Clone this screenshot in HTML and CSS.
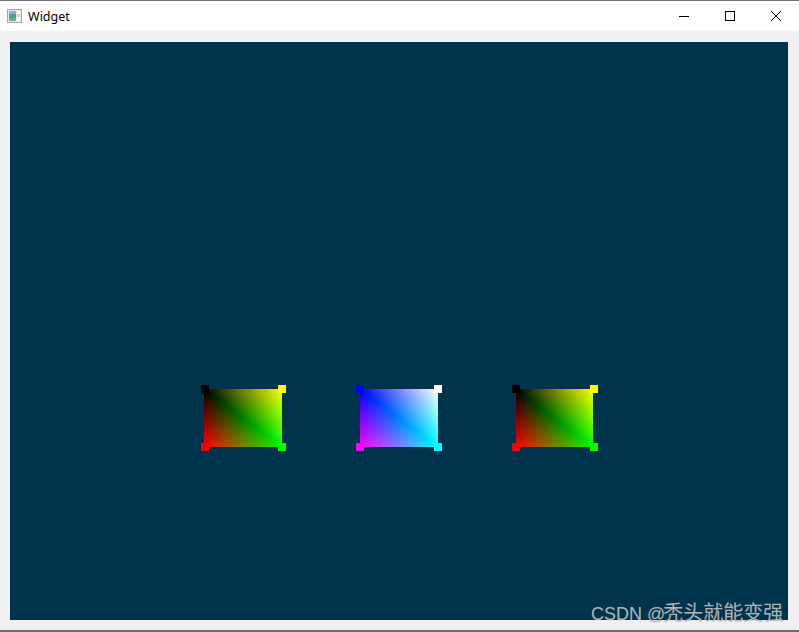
FILE: index.html
```html
<!DOCTYPE html>
<html lang="zh">
<head>
  <meta charset="UTF-8">
  <meta name="viewport" content="width=device-width, initial-scale=1.0">
  <title>Widget</title>
  <link rel="stylesheet" href="styles.css">
</head>
<body>

  <div class="window">
    <div class="titlebar">
      <svg class="app-icon" width="15" height="14" viewBox="0 0 15 14">
        <rect x="0.5" y="0.5" width="14" height="13" fill="#ececec" stroke="#a6a6a6"/>
        <rect x="2" y="2" width="7" height="10" fill="#5f97a0"/>
        <rect x="2" y="2" width="7" height="3" fill="#8fb0cc"/>
        <rect x="2" y="9" width="7" height="3" fill="#76ab8c"/>
        <rect x="10" y="2" width="3" height="10" fill="#f4f6f2"/>
        <rect x="10" y="5" width="3" height="3" fill="#c3d8d3"/>
      </svg>
      <span class="title">Widget</span>
      <div class="controls">
        <button class="control">
          <svg width="12" height="12" viewBox="0 0 12 12"><path d="M1 6.5h10" stroke="#000" fill="none"/></svg>
        </button>
        <button class="control">
          <svg width="12" height="12" viewBox="0 0 12 12"><rect x="1.5" y="1.5" width="9" height="9" stroke="#000" fill="none"/></svg>
        </button>
        <button class="control">
          <svg width="12" height="12" viewBox="0 0 12 12"><path d="M1 1l10 10M11 1L1 11" stroke="#000" fill="none"/></svg>
        </button>
      </div>
    </div>

    <div class="client">
      <div class="canvas">
        <div class="quad quad-warm quad-first">
          <i class="handle tl black"></i>
          <i class="handle tr yellow"></i>
          <i class="handle bl red"></i>
          <i class="handle br green"></i>
        </div>
        <div class="quad quad-cool">
          <i class="handle tl blue"></i>
          <i class="handle tr white"></i>
          <i class="handle bl magenta"></i>
          <i class="handle br cyan"></i>
        </div>
        <div class="quad quad-warm quad-last">
          <i class="handle tl black"></i>
          <i class="handle tr yellow"></i>
          <i class="handle bl red"></i>
          <i class="handle br green"></i>
        </div>
      </div>
    </div>
  </div>

  <div class="watermark">CSDN @<span class="watermark-cjk">秃头就能变强</span></div>

</body>
</html>
```

FILE: styles.css
```css
html, body {
  margin: 0;
  padding: 0;
  height: 100%;
  overflow: hidden;
}

body {
  position: relative;
  font-family: "Noto Sans", "Liberation Sans", sans-serif;
}

.window {
  display: flex;
  flex-direction: column;
  height: 632px;
  box-sizing: border-box;
  border-top: 1px solid #707070;
  border-bottom: 2px solid #6e6e6e;
  background-color: #f0f0f0;
}

.titlebar {
  display: flex;
  align-items: center;
  height: 30px;
  padding-left: 7px;
  background-color: #fff;
}

.app-icon {
  flex: none;
  margin-bottom: 1px;
}

.title {
  margin-left: 6px;
  font-size: 12.5px;
  color: #000;
}

.controls {
  display: flex;
  margin-left: auto;
}

.control {
  display: flex;
  align-items: center;
  justify-content: center;
  width: 46px;
  height: 30px;
  padding: 0;
  border: none;
  background: none;
}

.client {
  flex-grow: 1;
  padding: 11px 11px 10px 10px;
}

.canvas {
  display: flex;
  gap: 78px;
  height: 100%;
  box-sizing: border-box;
  padding: 347px 0 0 194px;
  background-color: #00344d;
}

/* Colours run like a GL quad split on the top-left to bottom-right diagonal */
.quad {
  position: relative;
  width: 78px;
  height: 58px;
  background-blend-mode: screen;
}

.quad-warm {
  background-image:
    linear-gradient(to right, #000, #0f0),
    linear-gradient(to top right, #f00, #000, #f00);
}

.quad-cool {
  background-image:
    linear-gradient(to right, #000, #0f0),
    linear-gradient(to top right, #f00, #000, #f00),
    linear-gradient(#00f, #00f);
}

.quad-last {
  width: 77px;
}

.handle {
  position: absolute;
  width: 8px;
  height: 8px;
}

.tl { left: -4px; top: -4px; }
.tr { right: -4px; top: -4px; }
.bl { left: -4px; bottom: -4px; }
.br { right: -4px; bottom: -4px; }

.quad-first .tl,
.quad-first .bl {
  left: -3px;
}

.quad-last .tr,
.quad-last .br {
  right: -5px;
}

.black { background-color: #000; }
.white { background-color: #fff; }
.red { background-color: #f00; }
.green { background-color: #0f0; }
.blue { background-color: #00f; }
.yellow { background-color: #ff0; }
.magenta { background-color: #f0f; }
.cyan { background-color: #0ff; }

.watermark {
  position: absolute;
  left: 591px;
  top: 601px;
  font-family: "Liberation Sans", "Noto Sans CJK SC", sans-serif;
  font-size: 18px;
  line-height: 24px;
  color: rgba(195, 200, 203, 0.85);
  text-shadow: 0 0 1px rgba(90, 90, 90, 0.6);
  white-space: nowrap;
}

.watermark-cjk {
  margin-left: -2px;
  font-size: 20px;
}
```
